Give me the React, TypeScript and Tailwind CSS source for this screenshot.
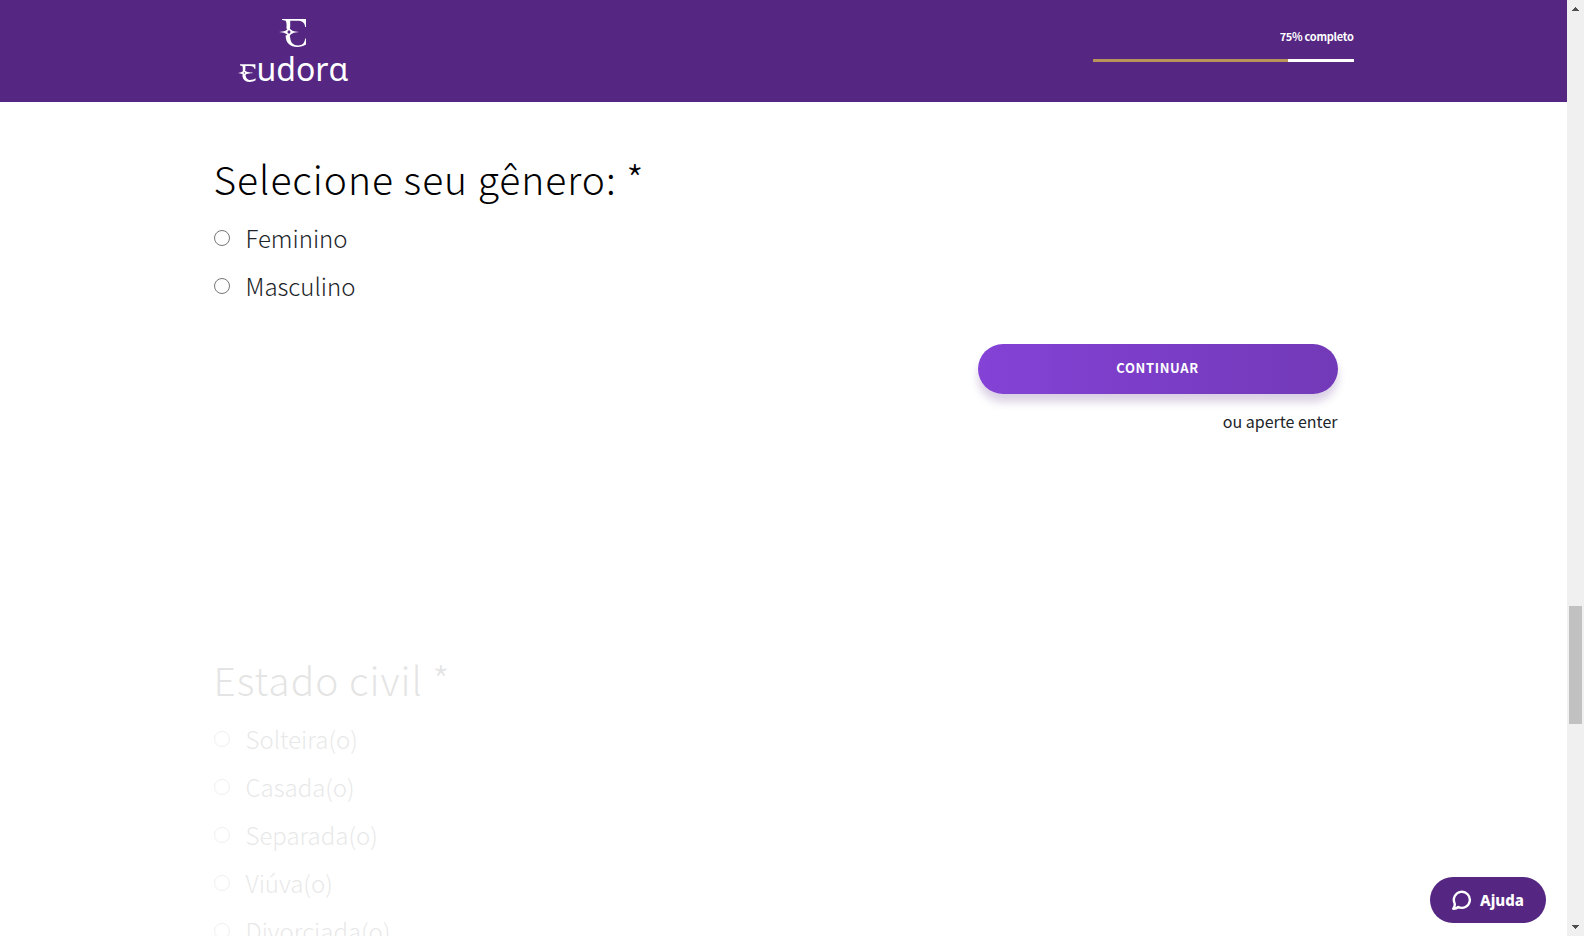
import React from "react";

function Monogram() {
  return (
    <svg viewBox="0 0 28 30" className="h-[30px] w-7" aria-hidden="true">
      <path d="M3 1 H27 V9 H26.2 C25.8 5.4 24 3.4 20 2.8 H11.2 V9 L10 12 L7.4 10.5 C7.8 7 7.6 4 6.6 2.8 C5.4 2.4 4 2.2 3 2 Z" fill="white" />
      <path d="M6.6 17.5 L10 16.5 L11.2 19.5 C11.6 25 14.5 27.4 19 27.4 C23.4 27.4 25.6 25 26.2 20.5 H27 V26.6 C24.6 28.2 21.8 29 18.4 29 C11 29 6.8 25 6.6 17.5 Z" fill="white" />
      <path
        fillRule="evenodd"
        d="M0 13.9 C5 13.6 8.7 12.6 10 8.4 C11.3 12.6 14.6 13.6 20 13.9 C14.6 14.3 11.3 15.3 10 19.6 C8.7 15.3 5 14.3 0 13.9 Z M8.2 14 L10 15.9 L11.8 14 L10 12 Z"
        fill="white"
      />
    </svg>
  );
}

function SmallMonogram() {
  return (
    <svg viewBox="0 0 19 18" className="mb-[7px] h-[18px] w-[19px] shrink-0" aria-hidden="true">
      <path d="M2 0.2 H17.4 V5 H16.6 C16 2.9 14.8 2.1 12.4 2 H7.4 V5.4 L6.4 8 L4.7 6.6 C5 4.4 4.8 2.6 4.2 1.9 L2 1.4 Z" fill="white" />
      <path d="M4.4 10.8 L6.6 9.8 L7.6 11.5 C8 14.6 9.6 15.9 12 15.9 C14.2 15.9 16 15.3 17.6 14.2 V16.2 C15.8 17.4 13.8 17.9 11.6 17.9 C7 17.9 4.4 15.4 4.4 10.8 Z" fill="white" />
      <path
        fillRule="evenodd"
        d="M0 8.9 C3.4 8.4 5.4 7.8 6.3 5 C7.2 7.8 9.4 8.2 14.5 8.5 V9.3 C9.4 9.6 7.2 10 6.3 13 C5.4 10 3.4 9.4 0 8.9 Z M5.5 8.9 L6.3 9.8 L7.1 8.9 L6.3 8 Z"
        fill="white"
      />
    </svg>
  );
}

function Logo() {
  return (
    <a href="#" aria-label="Eudora" className="ml-6 flex w-[110px] flex-col items-center pt-[18px] text-white">
      <Monogram />
      <span className="mt-px flex w-full items-end">
        <SmallMonogram />
        <span className="font-['Noto_Sans'] text-[32px] leading-10">udorɑ</span>
      </span>
    </a>
  );
}

function Progress({ value }: { value: number }) {
  return (
    <div className="flex w-[261px] flex-col items-end pt-[26px]">
      <span className="text-[11px] font-bold leading-5 tracking-tight text-white">{value}% completo</span>
      <div className="mt-[13px] h-[3px] w-full bg-white">
        <div className="h-full bg-[#b8935a]" style={{ width: `${value}%` }} />
      </div>
    </div>
  );
}

function Question({ title, name, options, dimmed }: { title: string; name: string; options: string[]; dimmed?: boolean }) {
  return (
    <fieldset className={dimmed ? "opacity-10" : ""}>
      <legend className="text-[39px] font-light leading-[56px] tracking-wide text-black">{title}</legend>
      <div className="mt-2 flex flex-col">
        {options.map((option) => (
          <label key={option} className="flex h-12 items-center gap-4 text-2xl font-light text-[#212529]">
            <input
              type="radio"
              name={name}
              className="size-4 shrink-0 appearance-none rounded-full border border-[#767676] bg-white checked:border-4 checked:border-[#552682]"
            />
            {option}
          </label>
        ))}
      </div>
    </fieldset>
  );
}

function ScrollRail() {
  return (
    <div aria-hidden="true" className="flex w-[17px] shrink-0 flex-col items-center justify-between bg-[#f0f0f0] py-[7px]">
      <svg viewBox="0 0 7 4" className="h-1 w-[7px]" shapeRendering="crispEdges">
        <path d="M0 4 L3.5 0 L7 4 Z" fill="#505050" />
      </svg>
      <div className="flex w-full grow flex-col items-center">
        <div className="grow-[595]" />
        <div className="h-[118px] w-[13px] bg-[#c1c1c1]" />
        <div className="grow-[201]" />
      </div>
      <svg viewBox="0 0 7 4" className="h-1 w-[7px]" shapeRendering="crispEdges">
        <path d="M0 0 L3.5 4 L7 0 Z" fill="#505050" />
      </svg>
    </div>
  );
}

export default function App() {
  return (
    <div className="flex h-screen overflow-hidden bg-white font-['Noto_Sans_CJK_JP','Open_Sans',sans-serif]">
      <div className="flex min-w-0 grow flex-col overflow-hidden">
        <header className="h-[102px] shrink-0 bg-[#552682]">
          <div className="mx-auto flex max-w-[1140px] justify-between">
            <Logo />
            <Progress value={75} />
          </div>
        </header>
        <main className="mx-auto w-full max-w-[1140px] pt-12">
          <section className="h-[501px]">
            <Question title="Selecione seu gênero: *" name="genero" options={["Feminino", "Masculino"]} />
            <div className="mr-4 mt-[34px] flex flex-col items-end">
              <button
                type="button"
                className="h-[50px] w-[360px] rounded-full bg-linear-to-r from-[#8442d6] to-[#7239b8] pb-0.5 text-[13px] font-bold tracking-wider text-white shadow-[0_8px_8px_rgba(85,38,130,0.22)]"
              >
                CONTINUAR
              </button>
              <p className="mt-[11px] text-base leading-8 text-[#212529]">ou aperte enter</p>
            </div>
          </section>
          <section>
            <Question
              title="Estado civil *"
              name="estado-civil"
              options={["Solteira(o)", "Casada(o)", "Separada(o)", "Viúva(o)", "Divorciada(o)"]}
              dimmed
            />
          </section>
        </main>
      </div>
      <button
        type="button"
        className="absolute bottom-[13px] right-[38px] flex h-[46px] w-[116px] items-center justify-center gap-2 rounded-full bg-[#552682] font-['Noto_Sans'] text-[15px] font-extrabold text-white"
      >
        <svg viewBox="0 0 20 20" className="size-5" fill="none" stroke="white" strokeWidth="2.4" aria-hidden="true">
          <path d="M2.6 13.2 A8 8 0 1 1 6.3 17 C5 18.2 3.2 18.8 1.2 18.7 C2.4 17.2 3.1 15.2 2.6 13.2 Z" strokeLinejoin="round" />
        </svg>
        Ajuda
      </button>
      <ScrollRail />
    </div>
  );
}
